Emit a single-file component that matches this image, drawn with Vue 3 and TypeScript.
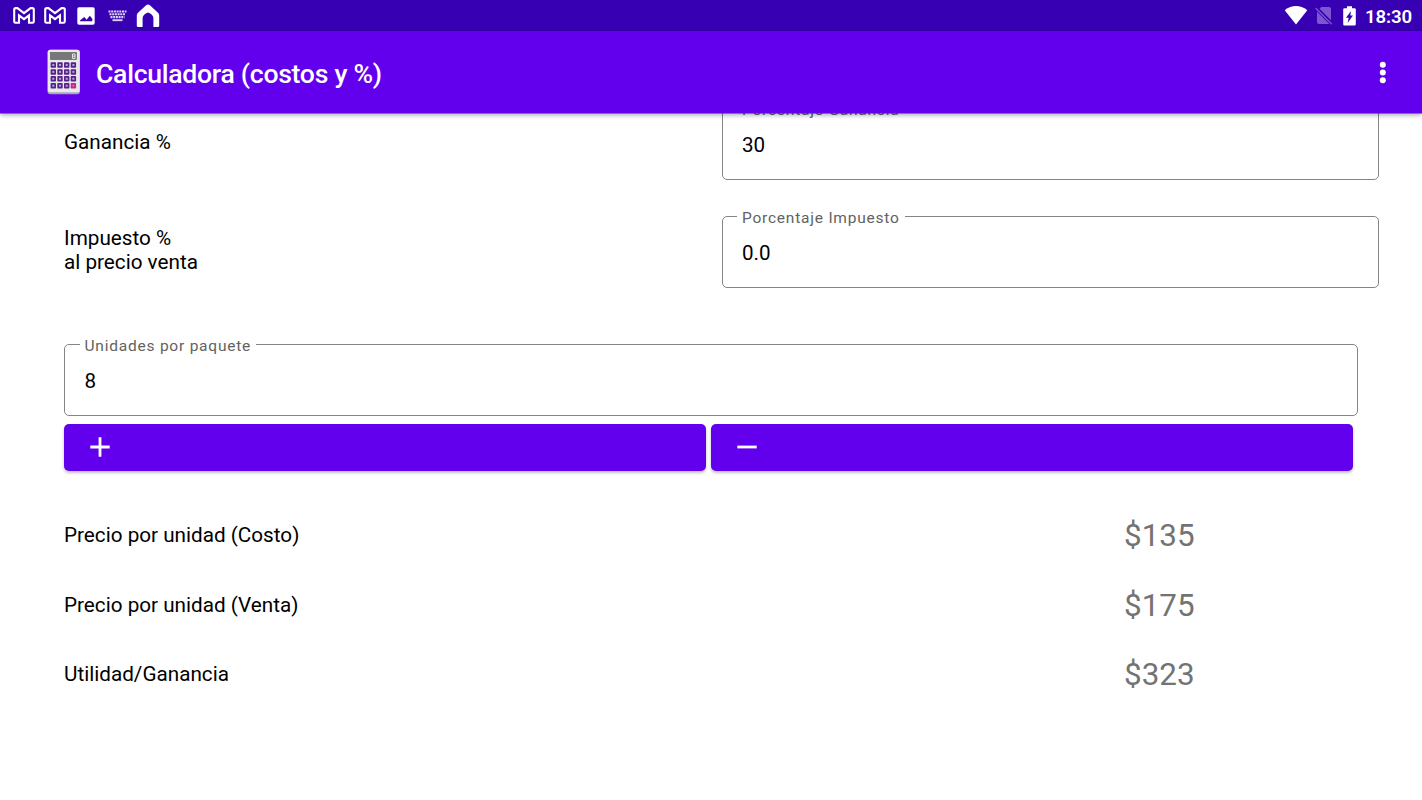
<script setup lang="ts">
import { ref } from 'vue'

interface Result {
  label: string
  value: string
}

const ganancia = ref('30')
const impuesto = ref('0.0')
const unidades = ref('8')

const results: Result[] = [
  { label: 'Precio por unidad (Costo)', value: '$135' },
  { label: 'Precio por unidad (Venta)', value: '$175' },
  { label: 'Utilidad/Ganancia', value: '$323' },
]

const keys: { x: number; y: number; accent: boolean }[] = []
for (let row = 0; row < 4; row++) {
  for (let col = 0; col < 4; col++) {
    keys.push({ x: 3.6 + col * 6.7, y: 13.3 + row * 6.9, accent: row === 3 && col === 3 })
  }
}
</script>

<template>
  <div class="screen">
    <header class="status">
      <div class="notifications">
        <svg v-for="n in 2" :key="n" class="mail" width="22" height="17" viewBox="0 0 22 17">
          <path d="M1.2 2.600Q1.200 1.100 2.700 1.100H4.400L11 6.200l6.600-5.100h1.700q1.500 0 1.500 1.500V14.400q0 1.300-1.300 1.300H16V8.300L11 12.200 6 8.300v7.400H2.500q-1.300 0-1.300-1.300z" />
        </svg>
        <svg class="photo" width="18" height="18" viewBox="0 0 18 18">
          <path fill="#fff" fill-rule="evenodd" d="M2 .3h14q1.700 0 1.700 1.700v14q0 1.700-1.700 1.700H2Q.3 17.700.3 16V2Q.3.300 2 .300zM3 14.300h12.300v-2.600l-2.500-3-3.200 4-2.400-2.600L3 13.400z" />
        </svg>
        <svg class="keyboard" width="19" height="12" viewBox="0 0 19 12">
          <path d="M.5 1.500h18M1.500 4.300h16M2.500 7.100h14" stroke="#dcd2f5" stroke-width="2.100" stroke-dasharray="2 .7" />
          <path d="M4.500 10.200h10" stroke="#dcd2f5" stroke-width="1.900" />
        </svg>
        <svg class="home" width="24" height="24" viewBox="0 0 24 24">
          <path fill="#fff" d="M.8 11.500Q.8 9.900 2 8.800L9.800 1.400q2.200-1.900 4.400 0L22 8.800q1.200 1.100 1.200 2.700v10.300q0 1.200-1.200 1.200h-4.600V13.700Q17 10.500 12 8.500 7 10.500 6.600 13.700V23H2Q.8 23 .8 21.800z" />
        </svg>
      </div>
      <div class="system">
        <svg class="wifi" width="24" height="19" viewBox="0 0 24 19">
          <path fill="#fff" d="M.7 4.200Q12-4 23.300 4.200L12 18.500z" />
        </svg>
        <svg class="sim" width="18" height="19" viewBox="0 0 18 19">
          <path fill="#7d57cd" d="M6.300 1H14q2 0 2 2v11.200L4.600 2.700zM2 5.600l12.300 12.300H4q-2 0-2-2z" />
          <path d="M.6 2l16.200 16.200" stroke="#7d57cd" stroke-width="1.300" />
        </svg>
        <svg class="battery" width="13" height="20" viewBox="0 0 13 20">
          <path fill="#fff" fill-rule="evenodd" d="M4 .3h5v1.900h2.500q1.300 0 1.300 1.300v14.800q0 1.300-1.300 1.300h-10Q.2 19.600.2 18.300V3.500q0-1.300 1.300-1.300H4zM8 5L3 11.800h2.700L4.600 17l5.400-7.500H7.300z" />
        </svg>
        <span class="clock">18:30</span>
      </div>
    </header>

    <nav class="appbar">
      <svg class="logo" width="34" height="46" viewBox="0 0 34 46">
        <rect x=".5" y=".8" width="32.500" height="44.500" rx="3" fill="#aaa8b0" />
        <rect x=".8" y=".8" width="31.900" height="42.500" rx="2.500" fill="#e9e8ec" />
        <rect x="3.500" y="3.500" width="26" height="7" fill="#777679" stroke="#555" stroke-width=".6" />
        <path d="M25.500 5h2.500v4.500h-2.500V5M25.500 7.200H28" fill="none" stroke="#e1e1e1" stroke-width="1" />
        <g v-for="(k, i) in keys" :key="i">
          <rect :x="k.x" :y="k.y" width="5.400" height="5.500" rx=".8" :fill="k.accent ? '#c32884' : '#57228d'" />
          <rect :x="k.x + 1.7" :y="k.y + 1.7" width="2" height="2" :fill="k.accent ? '#d568a8' : '#b8a2cc'" />
        </g>
      </svg>
      <h1>Calculadora (costos y %)</h1>
      <svg class="more" width="8" height="24" viewBox="0 0 8 24">
        <circle v-for="y in [4.7, 12.5, 20.3]" :key="y" cx="3.8" :cy="y" r="3" fill="#fff" />
      </svg>
    </nav>

    <main>
      <div class="row first">
        <span class="caption">Ganancia %</span>
        <fieldset>
          <legend>Porcentaje Ganancia</legend>
          <input v-model="ganancia" aria-label="Porcentaje Ganancia" />
        </fieldset>
      </div>
      <div class="row second">
        <span class="caption">Impuesto %<br />al precio venta</span>
        <fieldset>
          <legend>Porcentaje Impuesto</legend>
          <input v-model="impuesto" aria-label="Porcentaje Impuesto" />
        </fieldset>
      </div>
      <fieldset class="units">
        <legend>Unidades por paquete</legend>
        <input v-model="unidades" aria-label="Unidades por paquete" />
      </fieldset>
      <div class="buttons">
        <button type="button" aria-label="Sumar">
          <svg width="20" height="20" viewBox="0 0 20 20"><path d="M.3 10h19.400M10 .3v19.400" stroke="#fff" stroke-width="2.800" /></svg>
        </button>
        <button type="button" aria-label="Restar">
          <svg width="20" height="20" viewBox="0 0 20 20"><path d="M.3 10h19.400" stroke="#fff" stroke-width="2.800" /></svg>
        </button>
      </div>
      <section class="results">
        <div v-for="r in results" :key="r.label" class="result">
          <span class="caption">{{ r.label }}</span>
          <span class="value">{{ r.value }}</span>
        </div>
      </section>
    </main>
  </div>
</template>

<style>
body {
  margin: 0;
  background: #fff;
}
</style>

<style scoped>
.screen {
  display: flex;
  flex-direction: column;
  width: 1422px;
  height: 800px;
  overflow: hidden;
  background: #fff;
  color: #000;
  font-family: Roboto, sans-serif;
}
.status {
  flex: none;
  display: flex;
  align-items: center;
  justify-content: space-between;
  height: 31px;
  padding: 0 10px 0 13px;
  box-sizing: border-box;
  background: #3700b3;
}
.notifications,
.system {
  display: flex;
  align-items: center;
}
.mail {
  margin-right: 9px;
}
.mail path {
  fill: none;
  stroke: #fff;
  stroke-width: 2.1;
}
.photo {
  margin-left: 2px;
  margin-right: 13px;
}
.keyboard {
  margin-right: 9px;
}
.wifi {
  margin-right: 7px;
}
.sim {
  margin-right: 10px;
}
.battery {
  margin-right: 9px;
}
.clock {
  width: 47px;
  font-size: 18.6px;
  font-weight: 600;
  line-height: 24px;
  letter-spacing: -0.1px;
  color: #fff;
  padding-top: 2px;
}
.appbar {
  flex: none;
  z-index: 1;
  display: flex;
  align-items: center;
  height: 82px;
  padding: 0 35px 0 47px;
  background: #6200ee;
  box-shadow: 0 0.5px 0 #6200ee, 0 2px 5px rgba(0, 0, 0, 0.35);
}
.logo {
  margin-right: 15px;
}
h1 {
  flex: 1;
  margin: 4px 0 0;
  color: #fff;
  font-size: 26.6px;
  font-weight: 500;
  line-height: 32px;
  letter-spacing: -0.28px;
}
main {
  flex: 1;
  min-height: 0;
  padding-left: 64px;
}
.row {
  display: grid;
  grid-template-columns: 657.5px 657.5px;
  align-items: center;
}
.first {
  margin-top: -15px;
}
.second {
  margin-top: 26px;
}
.caption {
  font-size: 20.7px;
  line-height: 24px;
}
.first .caption,
.second .caption {
  padding-top: 5px;
}
fieldset {
  box-sizing: border-box;
  min-width: 0;
  height: 82px;
  margin: 0;
  padding: 0 15px;
  border: 1px solid #848484;
  border-radius: 5px;
}
legend {
  height: 20px;
  margin-left: -0.5px;
  padding: 3px 5px 0;
  box-sizing: border-box;
  color: #626262;
  font-size: 15.5px;
  line-height: 18px;
  letter-spacing: 0.78px;
  white-space: nowrap;
}
input {
  display: block;
  width: 100%;
  height: 30px;
  margin: 12px 0 0 -0.5px;
  padding: 0 5px;
  box-sizing: border-box;
  border: 0;
  outline: 0;
  background: transparent;
  color: #000;
  font: 20.6px/30px Roboto, sans-serif;
}
.units {
  width: 1294px;
  margin-top: 46px;
}
.buttons {
  display: grid;
  grid-template-columns: 641.5px 642px;
  gap: 5.5px;
  margin-top: 8px;
}
button {
  display: flex;
  align-items: center;
  height: 47px;
  padding: 0 26px 1px;
  border: 0;
  border-radius: 5px;
  background: #6200ee;
  box-shadow: 0 2px 3px rgba(0, 0, 0, 0.25);
}
.results {
  margin-top: 29.5px;
}
.result {
  display: grid;
  grid-template-columns: 1060px auto;
  align-items: center;
  height: 69.5px;
}
.value {
  padding-top: 2px;
  color: #737373;
  font-size: 31.4px;
  line-height: 36px;
}
</style>
